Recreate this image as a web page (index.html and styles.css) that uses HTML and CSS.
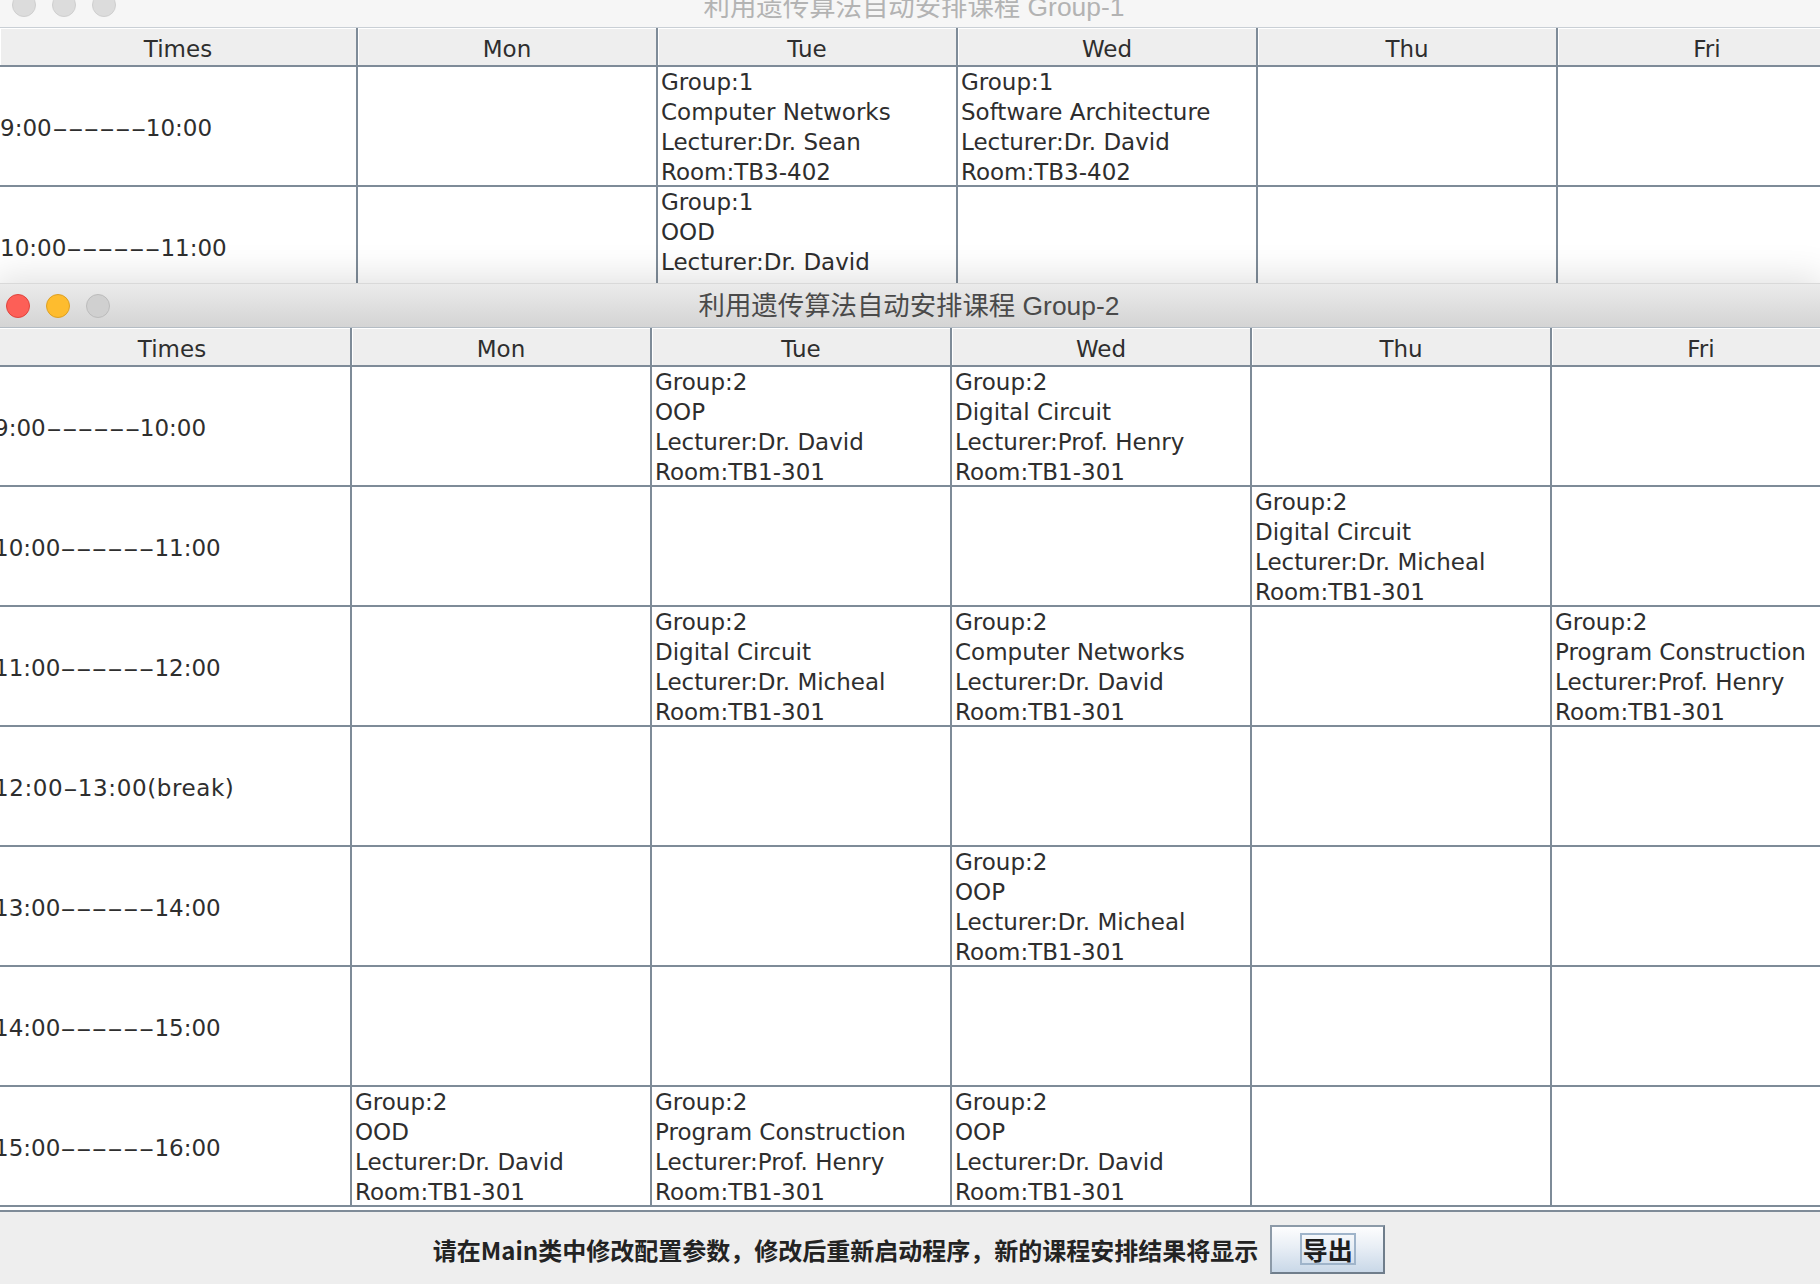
FILE: index.html
```html
<!DOCTYPE html>
<html lang="zh">
<head>
<meta charset="utf-8">
<title>利用遗传算法自动安排课程</title>
<link rel="stylesheet" href="styles.css">
</head>
<body>
<div class="desktop">

  <div class="window win-back">
    <div class="titlebar inactive">
      <div class="lights">
        <span class="light"></span><span class="light"></span><span class="light"></span>
      </div>
      <div class="title">利用遗传算法自动安排课程 Group-1</div>
      <div></div>
    </div>
    <div class="grid">
      <div class="hcell">Times</div><div class="hcell">Mon</div><div class="hcell">Tue</div><div class="hcell">Wed</div><div class="hcell">Thu</div><div class="hcell">Fri</div>

      <div class="cell time">9:00<span class="dash">------</span>10:00</div>
      <div class="cell"></div>
      <div class="cell">Group:1<br>Computer Networks<br>Lecturer:Dr. Sean<br>Room:TB3-402</div>
      <div class="cell">Group:1<br>Software Architecture<br>Lecturer:Dr. David<br>Room:TB3-402</div>
      <div class="cell"></div>
      <div class="cell"></div>

      <div class="cell time">10:00<span class="dash">------</span>11:00</div>
      <div class="cell"></div>
      <div class="cell">Group:1<br>OOD<br>Lecturer:Dr. David<br>Room:TB3-402</div>
      <div class="cell"></div>
      <div class="cell"></div>
      <div class="cell"></div>
    </div>
  </div>

  <div class="window win-front">
    <div class="titlebar">
      <div class="lights">
        <span class="light red"></span><span class="light yellow"></span><span class="light grey"></span>
      </div>
      <div class="title">利用遗传算法自动安排课程 Group-2</div>
      <div></div>
    </div>
    <div class="scroll">
      <div class="grid">
        <div class="hcell">Times</div><div class="hcell">Mon</div><div class="hcell">Tue</div><div class="hcell">Wed</div><div class="hcell">Thu</div><div class="hcell">Fri</div>

        <div class="cell time">9:00<span class="dash">------</span>10:00</div>
        <div class="cell"></div>
        <div class="cell">Group:2<br>OOP<br>Lecturer:Dr. David<br>Room:TB1-301</div>
        <div class="cell">Group:2<br>Digital Circuit<br>Lecturer:Prof. Henry<br>Room:TB1-301</div>
        <div class="cell"></div>
        <div class="cell"></div>

        <div class="cell time">10:00<span class="dash">------</span>11:00</div>
        <div class="cell"></div>
        <div class="cell"></div>
        <div class="cell"></div>
        <div class="cell">Group:2<br>Digital Circuit<br>Lecturer:Dr. Micheal<br>Room:TB1-301</div>
        <div class="cell"></div>

        <div class="cell time">11:00<span class="dash">------</span>12:00</div>
        <div class="cell"></div>
        <div class="cell">Group:2<br>Digital Circuit<br>Lecturer:Dr. Micheal<br>Room:TB1-301</div>
        <div class="cell">Group:2<br>Computer Networks<br>Lecturer:Dr. David<br>Room:TB1-301</div>
        <div class="cell"></div>
        <div class="cell">Group:2<br>Program Construction<br>Lecturer:Prof. Henry<br>Room:TB1-301</div>

        <div class="cell time wide">12:00<span class="dash1">-</span>13:00(break)</div>
        <div class="cell"></div>
        <div class="cell"></div>
        <div class="cell"></div>
        <div class="cell"></div>
        <div class="cell"></div>

        <div class="cell time">13:00<span class="dash">------</span>14:00</div>
        <div class="cell"></div>
        <div class="cell"></div>
        <div class="cell">Group:2<br>OOP<br>Lecturer:Dr. Micheal<br>Room:TB1-301</div>
        <div class="cell"></div>
        <div class="cell"></div>

        <div class="cell time">14:00<span class="dash">------</span>15:00</div>
        <div class="cell"></div>
        <div class="cell"></div>
        <div class="cell"></div>
        <div class="cell"></div>
        <div class="cell"></div>

        <div class="cell time">15:00<span class="dash">------</span>16:00</div>
        <div class="cell">Group:2<br>OOD<br>Lecturer:Dr. David<br>Room:TB1-301</div>
        <div class="cell">Group:2<br>Program Construction<br>Lecturer:Prof. Henry<br>Room:TB1-301</div>
        <div class="cell">Group:2<br>OOP<br>Lecturer:Dr. David<br>Room:TB1-301</div>
        <div class="cell"></div>
        <div class="cell"></div>
      </div>
    </div>
    <div class="panel">
      <span class="hint">请在Main类中修改配置参数，修改后重新启动程序，新的课程安排结果将显示</span>
      <button class="btn" type="button"><span class="focus">导出</span></button>
    </div>
  </div>

</div>
</body>
</html>
```

FILE: styles.css
```css
html, body {
  margin: 0;
  padding: 0;
  background: #ffffff;
}

body {
  width: 1820px;
  height: 1284px;
  overflow: hidden;
}

.desktop {
  position: relative;
  width: 1820px;
  height: 1284px;
  overflow: hidden;
}

.window {
  position: absolute;
  display: flex;
  flex-direction: column;
  overflow: hidden;
  background: #ffffff;
}

.win-back {
  top: -17px;
  left: 0;
  width: 1828px;
  height: 340px;
}

.win-front {
  top: 283px;
  left: -6px;
  width: 1830px;
  height: 1010px;
  box-shadow: 0 -6px 34px rgba(0, 0, 0, 0.12);
}

/* title bar */
.titlebar {
  height: 45px;
  flex: none;
  display: grid;
  grid-template-columns: 1fr auto 1fr;
  align-items: center;
  background: linear-gradient(#ebebeb, #d4d4d4);
  border-top: 1px solid #d9d9d9;
  border-bottom: 1px solid #b4bcc4;
  box-sizing: border-box;
}

.titlebar.inactive {
  background: #f6f6f6;
  border-top: 0;
  border-bottom: 1px solid #c9cfd5;
}

.lights {
  display: flex;
  gap: 16px;
  padding-left: 12px;
}

.light {
  width: 24px;
  height: 24px;
  border-radius: 50%;
  box-sizing: border-box;
  background: #dcdcdc;
  border: 1px solid #cfcfcf;
}

.light.red {
  background: #fd5f57;
  border-color: #df443d;
}

.light.yellow {
  background: #febc2e;
  border-color: #dda024;
}

.light.grey {
  background: #d0d0d0;
  border-color: #bcbcbc;
}

.title {
  font-family: "Liberation Sans", "Noto Sans CJK SC", sans-serif;
  font-size: 26.4px;
  color: #4a4a4a;
  white-space: nowrap;
  line-height: 30px;
}

.titlebar.inactive .title {
  color: #b3b3b3;
  padding-top: 3px;
}

/* table */
.grid {
  display: grid;
  grid-template-columns: 358px repeat(5, 300px);
  grid-template-rows: 39px;
  grid-auto-rows: 120px;
  font-family: "DejaVu Sans", sans-serif;
  font-size: 23px;
  color: #2e2e2e;
}

.hcell {
  box-sizing: border-box;
  background: #eeeeee;
  border-right: 2px solid #7e8b98;
  border-bottom: 2px solid #7e8b98;
  box-shadow: inset 1px 1px 0 #ffffff;
  display: flex;
  align-items: center;
  justify-content: center;
  padding-top: 6px;
  color: #2e2e2e;
  line-height: 1;
}

.cell {
  box-sizing: border-box;
  border-right: 2px solid #7e8b98;
  border-bottom: 2px solid #7e8b98;
  padding-left: 3px;
  line-height: 30px;
  overflow: hidden;
  white-space: nowrap;
  background: #ffffff;
}

.cell.time {
  display: flex;
  align-items: center;
  padding-left: 0;
  padding-top: 3px;
}

.cell.wide {
  letter-spacing: 0.6px;
}

.dash {
  display: inline-block;
  letter-spacing: -0.26px;
  transform: scaleX(1.95);
  transform-origin: 0 50%;
  margin-right: 45.9px;
}

.dash1 {
  display: inline-block;
  letter-spacing: -0.25px;
  transform: scaleX(1.8);
  transform-origin: 0 50%;
  margin-right: 6.5px;
}

.scroll {
  flex: none;
  padding-bottom: 3px;
  border-bottom: 2px solid #7e8b98;
}

/* bottom panel */
.panel {
  flex: none;
  height: 74px;
  background: #eeeeee;
  display: flex;
  align-items: center;
  justify-content: center;
  gap: 12px;
}

.hint {
  font-family: "Noto Sans CJK SC", sans-serif;
  font-weight: 700;
  font-size: 24px;
  color: #232323;
}

.btn {
  width: 115px;
  height: 49px;
  box-sizing: border-box;
  margin: 0;
  padding: 0;
  border: 2px solid #8c9aa8;
  border-right-color: #6f7d8b;
  border-bottom-color: #6f7d8b;
  background: linear-gradient(#fdfdfe, #e8eef5 45%, #c9d8e8);
  display: flex;
  align-items: center;
  justify-content: center;
}

.focus {
  font-family: "Noto Sans CJK SC", sans-serif;
  font-weight: 700;
  font-size: 25px;
  line-height: 28px;
  color: #1e1e1e;
  border: 2px solid #9fb4ca;
  padding: 0 1px;
}
```
